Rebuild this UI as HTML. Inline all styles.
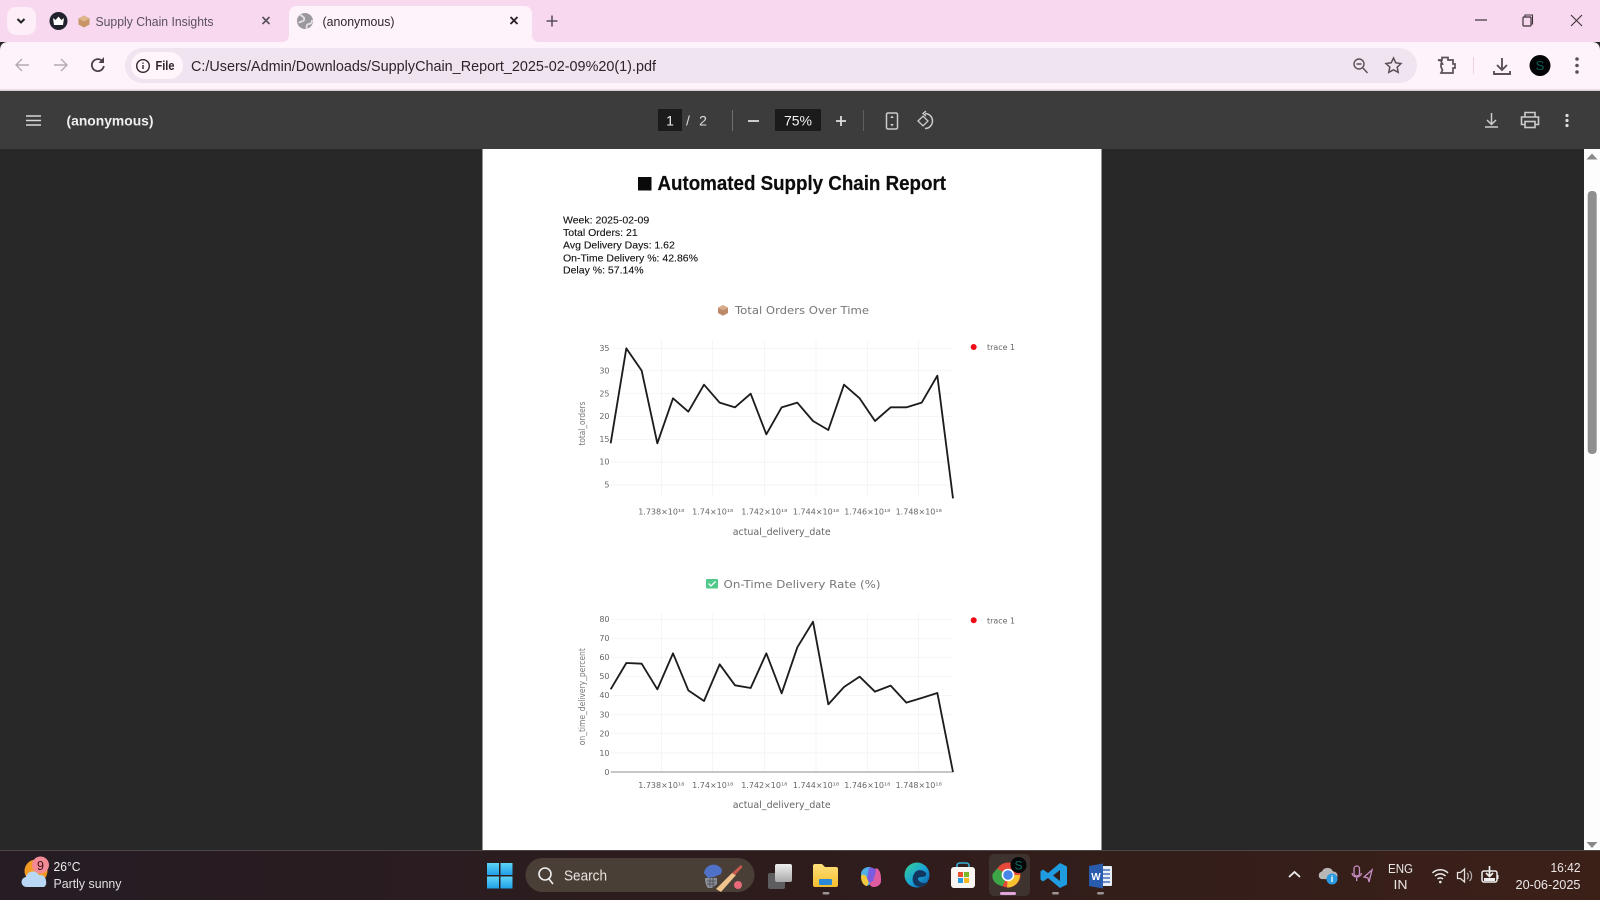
<!DOCTYPE html>
<html><head><meta charset="utf-8"><title>(anonymous)</title>
<style>
html,body{margin:0;padding:0;width:1600px;height:900px;overflow:hidden;background:#282828}
svg{display:block;position:absolute;left:0;top:0;filter:blur(.3px)}
text{font-family:"Liberation Sans",sans-serif}
.dj text,text.dj{font-family:"DejaVu Sans",sans-serif}
</style></head><body>
<svg width="1600" height="900" viewBox="0 0 1600 900" xmlns="http://www.w3.org/2000/svg">
<defs>
<linearGradient id="tb" x1="0" x2="1" y1="0" y2="0"><stop offset="0" stop-color="#251c24"/><stop offset=".5" stop-color="#2e1c1c"/><stop offset="1" stop-color="#3b2018"/></linearGradient>
<linearGradient id="win" x1="0" x2="0" y1="0" y2="1"><stop offset="0" stop-color="#5fd4f6"/><stop offset="1" stop-color="#1f9fe8"/></linearGradient>
<linearGradient id="fold" x1="0" x2="0" y1="0" y2="1"><stop offset="0" stop-color="#ffe07a"/><stop offset="1" stop-color="#f5bd2e"/></linearGradient>
<linearGradient id="edge" x1="0" x2="1" y1="0" y2="1"><stop offset="0" stop-color="#39d08f"/><stop offset=".5" stop-color="#1aa6d6"/><stop offset="1" stop-color="#0c59a8"/></linearGradient>
<linearGradient id="tv" x1="0" x2="0" y1="0" y2="1"><stop offset="0" stop-color="#efefef"/><stop offset="1" stop-color="#a9a9a9"/></linearGradient>
</defs>

<!-- Tab strip -->
<rect width="1600" height="42" fill="#f7d8ee"/>
<rect x="7" y="7" width="29" height="28" rx="9" fill="#fdeef8"/>
<path d="M17.500 19l3.500 3.500 3.500-3.500" fill="none" stroke="#222" stroke-width="2"/>
<circle cx="58.500" cy="21" r="9" fill="#22222c"/>
<path d="M53 18l2.600 2 2.900-3.400 2.900 3.400 2.600-2-1 7h-9z" fill="#fff"/>
<path d="M84 15.500l5.500 3v6l-5.500 3-5.500-3v-6z" fill="#c79468"/><path d="M84 15.500l5.500 3-5.500 3-5.500-3z" fill="#e0b48c"/>
<text x="95.500" y="26" font-size="13" fill="#5a505a" textLength="118" lengthAdjust="spacingAndGlyphs">Supply Chain Insights</text>
<path d="M262.500 17l7 7M269.500 17l-7 7" stroke="#5a505a" stroke-width="1.600"/>
<path d="M281 42c6 0 8-3 8-8V14c0-5 3-8 8-8h227c5 0 8 3 8 8v20c0 5 2 8 8 8z" fill="#fff3fb"/>
<circle cx="305" cy="21" r="8" fill="#9a989e"/><path d="M300 15c3 1 5 3 4 5s-4 1-5 3M307 29c-1-3 0-5 2-5s3-2 3-4" fill="none" stroke="#e2e0e4" stroke-width="1.800"/>
<text x="322.500" y="26" font-size="13" fill="#2c262c" textLength="72" lengthAdjust="spacingAndGlyphs">(anonymous)</text>
<path d="M510.500 17l7 7M517.500 17l-7 7" stroke="#2a2228" stroke-width="1.900"/>
<path d="M552 15.500v11M546.500 21h11" stroke="#5a505a" stroke-width="1.600"/>
<path d="M1475 20h12" stroke="#3c3238" stroke-width="1.200"/>
<rect x="1523" y="17" width="8" height="9" rx="1" fill="none" stroke="#3c3238" stroke-width="1.200"/><path d="M1525 17v-2h7.500v9h-1.500" fill="none" stroke="#3c3238" stroke-width="1.100"/>
<path d="M1571 15l11 11M1582 15l-11 11" stroke="#3c3238" stroke-width="1.100"/>

<!-- Address bar -->
<path d="M0 90V50c0-5 3-8 8-8h1584c5 0 8 3 8 8v40z" fill="#fff3fb"/>
<rect x="0" y="89.500" width="1600" height="1.500" fill="#d9d0d6"/>
<path d="M29 65H17M22 59l-6 6 6 6" fill="none" stroke="#b3a9b1" stroke-width="1.400"/>
<path d="M54 65h12M61 59l6 6-6 6" fill="none" stroke="#b3a9b1" stroke-width="1.400"/>
<path d="M103 62a6 6 0 1 0 .8 4" fill="none" stroke="#4a4048" stroke-width="1.800"/><path d="M104 57v6h-5.500z" fill="#4a4048"/>
<rect x="125" y="48" width="1292" height="35" rx="17.500" fill="#f0e4f0"/>
<rect x="131" y="52" width="52" height="27" rx="13.500" fill="#fff5fb"/>
<circle cx="143" cy="66" r="6.300" fill="none" stroke="#2f272d" stroke-width="1.400"/><path d="M143 65v4M143 62.500v1.300" stroke="#2f272d" stroke-width="1.400"/>
<text x="155.500" y="70" font-size="12.500" fill="#2c262c" font-weight="700" textLength="19" lengthAdjust="spacingAndGlyphs">File</text>
<text x="191" y="71" font-size="15" fill="#2c262c" textLength="465" lengthAdjust="spacingAndGlyphs">C:/Users/Admin/Downloads/SupplyChain_Report_2025-02-09%20(1).pdf</text>
<circle cx="1359" cy="64" r="5" fill="none" stroke="#5a505a" stroke-width="1.400"/><path d="M1363 68l4.500 5M1356.500 64h5" stroke="#5a505a" stroke-width="1.400"/>
<path d="M1393.500 58l2.300 4.800 5.200.7-3.800 3.600 1 5.200-4.700-2.500-4.700 2.500 1-5.200-3.800-3.600 5.200-.7z" fill="none" stroke="#5a505a" stroke-width="1.500"/>
<path d="M1438 60h4v-2.500h6V60h5v4h2v4h-2v5h-12l1.500-3-1.500-3v-3h1.500l-1.500-3z" fill="none" stroke="#5a505a" stroke-width="1.700"/>
<rect x="1473" y="57" width="1" height="17" fill="#f3cfe6"/>
<path d="M1502 58v11M1497 65l5 5 5-5M1494 71v3h16v-3" fill="none" stroke="#5a505a" stroke-width="1.900"/>
<circle cx="1540" cy="65.500" r="10.500" fill="#020406"/><text x="1540" y="70" font-size="13" fill="#0b5d54" text-anchor="middle">S</text>
<circle cx="1577" cy="59" r="1.800" fill="#5a505a"/><circle cx="1577" cy="65.500" r="1.800" fill="#5a505a"/><circle cx="1577" cy="72" r="1.800" fill="#5a505a"/>

<!-- PDF toolbar -->
<rect y="91" width="1600" height="58" fill="#3c3c3c"/>
<path d="M26 116h15M26 120.500h15M26 125h15" stroke="#d8d8d8" stroke-width="1.600"/>
<text x="66.500" y="125.500" font-size="14" font-weight="700" fill="#efefef" textLength="87" lengthAdjust="spacingAndGlyphs">(anonymous)</text>
<rect x="658" y="109" width="24" height="22" fill="#1b1b1b"/>
<text x="670" y="125.500" font-size="14" fill="#f2f2f2" text-anchor="middle">1</text>
<text x="688" y="125.500" font-size="14" fill="#dedede" text-anchor="middle">/</text>
<text x="703" y="125.500" font-size="14" fill="#dedede" text-anchor="middle">2</text>
<rect x="732" y="110" width="1" height="21" fill="#707070"/>
<path d="M748 121h11" stroke="#ddd" stroke-width="1.800"/>
<rect x="775" y="109" width="46" height="22" fill="#1b1b1b"/>
<text x="798" y="125.500" font-size="14" fill="#f2f2f2" text-anchor="middle">75%</text>
<path d="M836 121h10M841 116v10" stroke="#ddd" stroke-width="1.800"/>
<rect x="863" y="110" width="1" height="21" fill="#606060"/>
<rect x="886.500" y="113" width="11" height="16" rx="1.500" fill="none" stroke="#ccc" stroke-width="1.500"/><path d="M892 115.500l-1.800 2.500h3.600zM892 126.500l-1.800-2.500h3.600z" fill="#ccc"/>
<path d="M925 113.500a7.500 7.500 0 1 1 0 15" fill="none" stroke="#ccc" stroke-width="1.500"/><path d="M926 111l-3 2.500 3 2.500M918 121l5-4.800 5 4.800-5 4.800z" fill="none" stroke="#ccc" stroke-width="1.300"/>
<path d="M1491.500 113v11M1487 120l4.500 4.500 4.500-4.500M1485 127h13" fill="none" stroke="#ccc" stroke-width="1.500"/>
<path d="M1525 117v-4.500h10v4.500M1525 124.500h-3.500V117h17v7.500H1535" fill="none" stroke="#ccc" stroke-width="1.600"/><rect x="1525" y="121.500" width="10" height="6" fill="none" stroke="#ccc" stroke-width="1.600"/>
<circle cx="1567" cy="115.500" r="1.600" fill="#ddd"/><circle cx="1567" cy="120.500" r="1.600" fill="#ddd"/><circle cx="1567" cy="125.500" r="1.600" fill="#ddd"/>

<!-- Viewer body -->
<rect y="149" width="1600" height="701" fill="#282828"/>
<rect x="482.500" y="149" width="619" height="701" fill="#fff"/>
<rect x="1584" y="149" width="16" height="701" fill="#fdfdfd"/>
<path d="M1592 153.500l5.500 6h-11z" fill="#8a8a8a"/>
<rect x="1587.700" y="191" width="9" height="263" rx="4" fill="#8f8f8f"/>
<path d="M1592 848l5.500-6h-11z" fill="#8a8a8a"/>

<!-- Report header -->
<rect x="638" y="177" width="13.500" height="13.500" fill="#0a0a0a"/>
<text x="657.500" y="190" font-size="20" font-weight="700" fill="#0c0c0c" stroke="#0c0c0c" stroke-width=".2" textLength="288.500" lengthAdjust="spacingAndGlyphs">Automated Supply Chain Report</text>
<g font-size="10.500" fill="#111" stroke="#111" stroke-width=".12">
<text x="563" y="223.500">Week: 2025-02-09</text>
<text x="563" y="236">Total Orders: 21</text>
<text x="563" y="248.700">Avg Delivery Days: 1.62</text>
<text x="563" y="261.300">On-Time Delivery %: 42.86%</text>
<text x="563" y="273.700">Delay %: 57.14%</text>
</g>

<!-- Chart 1 -->
<path d="M723 305l5 2.700v5.300l-5 2.700-5-2.700v-5.300z" fill="#bb8a66"/><path d="M723 305l5 2.700-5 2.700-5-2.700z" fill="#d6ab8a"/>
<text class="dj" x="735" y="314" font-size="10.500" fill="#777" textLength="134" lengthAdjust="spacingAndGlyphs">Total Orders Over Time</text>
<g transform="translate(560,330) scale(.33333)" stroke="#f0f0f0" stroke-width="2" fill="none">
<path d="M152 55H1179M152 122H1179M152 191H1179M152 259H1179M152 328H1179M152 396H1179M152 465H1179M304 30V500M458 30V500M613 30V500M768 30V500M922 30V500M1076 30V500"/>
<polyline points="152,340 199,55 245,122 292,340 339,205 385,245 432,164 479,218 525,232 572,191 619,313 665,232 712,218 759,273 805,300 852,164 899,205 945,273 992,232 1039,232 1085,218 1132,137 1179,505" stroke="#1c1c1c" stroke-width="5.500" stroke-linejoin="round"/>
</g>
<g class="dj" font-size="8" fill="#666" text-anchor="end">
<text x="609.500" y="350.800">35</text><text x="609.500" y="373.500">30</text><text x="609.500" y="396.500">25</text><text x="609.500" y="419">20</text><text x="609.500" y="442">15</text><text x="609.500" y="464.700">10</text><text x="609.500" y="487.500">5</text>
</g>
<g class="dj" font-size="8" fill="#666" text-anchor="middle">
<text x="661.300" y="514.500">1.738×10¹⁸</text><text x="712.700" y="514.500">1.74×10¹⁸</text><text x="764.300" y="514.500">1.742×10¹⁸</text><text x="816" y="514.500">1.744×10¹⁸</text><text x="867.300" y="514.500">1.746×10¹⁸</text><text x="918.700" y="514.500">1.748×10¹⁸</text>
</g>
<text class="dj" x="781.700" y="535" font-size="9.500" fill="#666" text-anchor="middle" textLength="98" lengthAdjust="spacingAndGlyphs">actual_delivery_date</text>
<text class="dj" transform="translate(585,423.500) rotate(-90)" font-size="9" fill="#777" text-anchor="middle" textLength="44" lengthAdjust="spacingAndGlyphs">total_orders</text>
<circle cx="973.700" cy="347" r="3" fill="#ee0a14"/>
<text class="dj" x="987" y="350" font-size="8" fill="#666" textLength="28" lengthAdjust="spacingAndGlyphs">trace 1</text>

<!-- Chart 2 -->
<rect x="706" y="579" width="12" height="9.500" rx="1" fill="#4fc98a"/><path d="M708.500 583.500l2.500 2.500 4.500-4.500" fill="none" stroke="#fff" stroke-width="1.300"/>
<text class="dj" x="723.500" y="588" font-size="10.500" fill="#777" textLength="157" lengthAdjust="spacingAndGlyphs">On-Time Delivery Rate (%)</text>
<g transform="translate(560,570) scale(.33333)" stroke="#f0f0f0" stroke-width="2" fill="none">
<path d="M152 148H1179M152 205H1179M152 262H1179M152 320H1179M152 377H1179M152 434H1179M152 491H1179M152 549H1179M304 130V606M458 130V606M613 130V606M768 130V606M922 130V606M1076 130V606"/>
<path d="M152 606H1179" stroke="#a5a5a5" stroke-width="4"/>
<polyline points="152,358 199,279 245,281 292,358 339,250 385,361 432,393 479,283 525,346 572,354 619,250 665,370 712,232 759,155 805,403 852,351 899,320 945,365 992,347 1039,398 1085,384 1132,369 1179,606" stroke="#1c1c1c" stroke-width="5.500" stroke-linejoin="round"/>
</g>
<g class="dj" font-size="8" fill="#666" text-anchor="end">
<text x="609.500" y="622">80</text><text x="609.500" y="641">70</text><text x="609.500" y="660">60</text><text x="609.500" y="679">50</text><text x="609.500" y="698">40</text><text x="609.500" y="717.500">30</text><text x="609.500" y="736.500">20</text><text x="609.500" y="756">10</text><text x="609.500" y="775">0</text>
</g>
<g class="dj" font-size="8" fill="#666" text-anchor="middle">
<text x="661.300" y="788">1.738×10¹⁸</text><text x="712.700" y="788">1.74×10¹⁸</text><text x="764.300" y="788">1.742×10¹⁸</text><text x="816" y="788">1.744×10¹⁸</text><text x="867.300" y="788">1.746×10¹⁸</text><text x="918.700" y="788">1.748×10¹⁸</text>
</g>
<text class="dj" x="781.700" y="808" font-size="9.500" fill="#666" text-anchor="middle" textLength="98" lengthAdjust="spacingAndGlyphs">actual_delivery_date</text>
<text class="dj" transform="translate(585,696.700) rotate(-90)" font-size="9" fill="#777" text-anchor="middle" textLength="97" lengthAdjust="spacingAndGlyphs">on_time_delivery_percent</text>
<circle cx="973.700" cy="620.300" r="3" fill="#ee0a14"/>
<text class="dj" x="987" y="623.300" font-size="8" fill="#666" textLength="28" lengthAdjust="spacingAndGlyphs">trace 1</text>

<!-- Taskbar -->
<rect y="850" width="1600" height="50" fill="url(#tb)"/>
<rect y="850" width="1600" height="1" fill="#4d4648"/>
<!-- weather -->
<circle cx="36" cy="871" r="11.500" fill="#f39a24"/>
<path d="M27 887a5 5 0 0 1-1-10 7 7 0 0 1 13-2 6 6 0 0 1 7 6 5 5 0 0 1-2 6z" fill="#b9d8f5"/>
<circle cx="40.500" cy="865" r="8.500" fill="#f58a97"/>
<text x="40.500" y="870" font-size="12.500" fill="#3a1016" text-anchor="middle">9</text>
<text x="53.500" y="871" font-size="13" fill="#f0ecee" textLength="27" lengthAdjust="spacingAndGlyphs">26°C</text>
<text x="53.500" y="888" font-size="13" fill="#e2dde0" textLength="68" lengthAdjust="spacingAndGlyphs">Partly sunny</text>
<!-- windows -->
<rect x="487" y="863" width="12" height="12" fill="url(#win)"/><rect x="500.500" y="863" width="12" height="12" fill="url(#win)"/><rect x="487" y="876.500" width="12" height="12" fill="url(#win)"/><rect x="500.500" y="876.500" width="12" height="12" fill="url(#win)"/>
<!-- search -->
<rect x="525.500" y="858" width="229" height="34" rx="17" fill="#4a3f36"/>
<circle cx="545" cy="874" r="6" fill="none" stroke="#eee" stroke-width="1.600"/><path d="M549 879l4 5" stroke="#eee" stroke-width="1.600"/>
<text x="564" y="880.500" font-size="15" fill="#e8e4e0" textLength="43" lengthAdjust="spacingAndGlyphs">Search</text>
<path d="M704 873a9.500 9.500 0 0 1 18-3l-1 4-7 3-6 1z" fill="#4f72c8"/>
<path d="M705 878h12v6l-5 4h-4c-2-2-3-6-3-10z" fill="#8a8f98"/><path d="M707 881h9M707 884h8M710 878v9M713 878v9" stroke="#4a4a50" stroke-width=".8"/>
<path d="M716 889l16-16 4 2-15 17z" fill="#f0c48c"/><path d="M732 873l9-8 1.500 2-7.500 8z" fill="#c85a50"/>
<circle cx="738" cy="885" r="4" fill="#e86a78"/>
<!-- task view -->
<rect x="768" y="873" width="17" height="16" rx="2" fill="#5d5d5f"/><rect x="775" y="864" width="17" height="18" rx="2" fill="url(#tv)"/>
<!-- explorer -->
<path d="M813 866a2 2 0 0 1 2-2h7l3 3h11a2 2 0 0 1 2 2v16a2 2 0 0 1-2 2h-21a2 2 0 0 1-2-2z" fill="url(#fold)"/>
<rect x="819" y="879" width="13" height="6" rx="1" fill="#2a8ad8"/>
<rect x="822.500" y="892" width="7" height="2.500" rx="1.200" fill="#9a9494"/>
<!-- copilot -->
<path d="M861 874c0-4 4-7 8-7 2 0 3 1 4 3l-3 14c-1 2-3 2-5 1-3-2-4-7-4-11z" fill="#4fb0e8"/>
<path d="M861 877c0-3 3-3 5-1l3 6-2 4c-3 0-6-4-6-9z" fill="#f2c83e"/>
<path d="M881 881c0 4-4 6-7 6-2 0-4-1-4-3l4-14c1-2 3-2 4-1 3 3 3 8 3 12z" fill="#e05ca0"/>
<path d="M869 868c3-1 6 0 7 3l-3 10-4 2-2-5z" fill="#7a5ce0"/>
<!-- edge -->
<circle cx="917" cy="875" r="12.500" fill="url(#edge)"/><path d="M914 874c2-5 9-5 12-1 1 3-2 4-5 4s-4 2-2 4 6 3 9 1c-3 5-9 6-13 3-3-3-3-8-1-11z" fill="#12365f"/>
<!-- store -->
<rect x="951" y="867" width="24" height="21" rx="3" fill="#f8f5f2"/><path d="M957 867v-2a3 3 0 0 1 3-2h6a3 3 0 0 1 3 2v2" fill="none" stroke="#38b0d8" stroke-width="1.600"/>
<rect x="958" y="872" width="5" height="5" fill="#e85030"/><rect x="964" y="872" width="5" height="5" fill="#7ab828"/><rect x="958" y="878" width="5" height="5" fill="#2a9ae0"/><rect x="964" y="878" width="5" height="5" fill="#f4b820"/>
<!-- chrome -->
<rect x="989" y="854" width="41" height="42" rx="5" fill="#3e332e"/>
<circle cx="1008" cy="875" r="12.500" fill="#e8483a"/><path d="M997 868.500l11 6.500-5.500 11c-7-1-11-6-10-12z" fill="#3fa648"/><path d="M1008 875h12a12.500 12.500 0 0 1-13 12.500z" fill="#f5c22e"/>
<circle cx="1008" cy="875" r="6.300" fill="#fff"/><circle cx="1008" cy="875" r="4.800" fill="#4a86e8"/>
<circle cx="1018.500" cy="865" r="8" fill="#050708"/><text x="1018.500" y="869.500" font-size="12" fill="#0b7266" text-anchor="middle">S</text>
<rect x="1000" y="892" width="16" height="3" rx="1.500" fill="#e3a4d8"/>
<!-- vscode -->
<path d="M1060 863l7 3.500v18l-7 3.500-12-10-5 3.500-2.500-2v-8l2.500-2 5 3.500zM1060 870l-7 5.500 7 5.500z" fill="#1f9be0" fill-rule="evenodd"/>
<rect x="1052" y="892" width="7" height="2.500" rx="1.200" fill="#9a9494"/>
<!-- word -->
<rect x="1097" y="866" width="15" height="20" rx="1" fill="#e8eef8"/><path d="M1100 870h10M1100 874h10M1100 878h10M1100 882h10" stroke="#2a5caa" stroke-width="1.300"/>
<path d="M1089 866l14-2.500v25l-14-2.500z" fill="#2a5cae"/><text x="1096" y="880" font-size="10" font-weight="700" fill="#fff" text-anchor="middle">W</text>
<rect x="1097" y="892" width="7" height="2.500" rx="1.200" fill="#9a9494"/>
<!-- tray -->
<path d="M1289 877l5.500-5 5.500 5" fill="none" stroke="#f0eeee" stroke-width="1.800"/>
<path d="M1321 879a4 4 0 0 1 1-7.500 6 6 0 0 1 11 0 4 4 0 0 1 1 8z" fill="#b9b6b6"/><circle cx="1332" cy="879" r="5.500" fill="#2a9ae0"/><path d="M1332 877v5M1332 875.500v1" stroke="#fff" stroke-width="1.300"/>
<rect x="1354" y="866" width="5.500" height="10" rx="2.700" fill="none" stroke="#c890c8" stroke-width="1.300"/><path d="M1352 873a4.800 4.800 0 0 0 9.500 0M1356.700 878v3" fill="none" stroke="#c890c8" stroke-width="1.300"/>
<path d="M1372 870l-8 7 4 1 1 4z" fill="none" stroke="#c890c8" stroke-width="1.300"/>
<text x="1400.500" y="873" font-size="13" fill="#ebe6e6" text-anchor="middle" textLength="25" lengthAdjust="spacingAndGlyphs">ENG</text>
<text x="1400.500" y="889" font-size="13" fill="#ebe6e6" text-anchor="middle" textLength="14" lengthAdjust="spacingAndGlyphs">IN</text>
<path d="M1432.500 873a11 11 0 0 1 15.500 0M1435 876a7.500 7.500 0 0 1 10.500 0M1437.500 879a4 4 0 0 1 5.500 0" fill="none" stroke="#eee" stroke-width="1.500"/><circle cx="1440.300" cy="882" r="1.300" fill="#eee"/>
<path d="M1457.500 872.500h3l4-3.500v13l-4-3.500h-3z" fill="none" stroke="#e6e2e2" stroke-width="1.300"/><path d="M1467 873a4 4 0 0 1 0 6M1469.500 871a7 7 0 0 1 0 10" fill="none" stroke="#b8b0b0" stroke-width="1.200"/>
<rect x="1482" y="871" width="15" height="11" rx="2" fill="none" stroke="#f0eeee" stroke-width="1.500"/><rect x="1497" y="875" width="1.500" height="4" fill="#eee"/><path d="M1489.500 866v10M1486 873l3.500 3.500 3.500-3.500" fill="none" stroke="#eee" stroke-width="1.700"/><rect x="1484" y="878" width="11" height="3" fill="#eee"/>
<text x="1580.500" y="872" font-size="13" fill="#ece8e8" text-anchor="end" textLength="30" lengthAdjust="spacingAndGlyphs">16:42</text>
<text x="1580.500" y="889" font-size="13" fill="#ece8e8" text-anchor="end" textLength="65" lengthAdjust="spacingAndGlyphs">20-06-2025</text>
</svg>
</body></html>
